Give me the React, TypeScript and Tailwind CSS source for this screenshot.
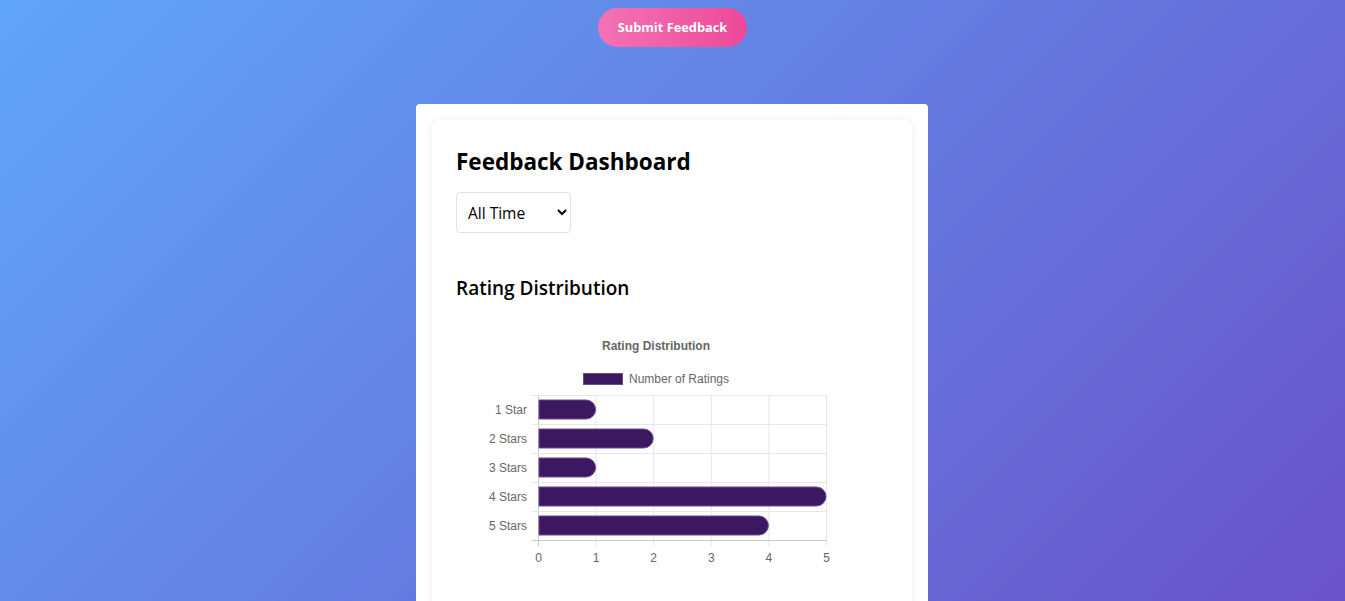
import React, { useState } from "react";

const ratings = [
  { label: "1 Star", value: 1 },
  { label: "2 Stars", value: 2 },
  { label: "3 Stars", value: 1 },
  { label: "4 Stars", value: 5 },
  { label: "5 Stars", value: 4 },
];

function RatingChart() {
  // plot area, svg coords
  const left = 82;
  const top = 65;
  const rowH = 29;
  const unit = 57.6;
  const plotW = unit * 5;
  const plotH = rowH * ratings.length;
  const font = "'Liberation Sans', Arial, sans-serif";

  return (
    <svg width="400" height="240" viewBox="0 0 400 240" className="block">
      <text x="200" y="19.5" textAnchor="middle" fontFamily={font} fontSize="12" fontWeight="bold" fill="#666">
        Rating Distribution
      </text>
      <rect x="127.5" y="43.5" width="39" height="11" fill="#3d1862" stroke="#6b4d8a" strokeWidth="1" />
      <text x="173" y="53" fontFamily={font} fontSize="12" fill="#666">
        Number of Ratings
      </text>

      {[0, 1, 2, 3, 4, 5].map((i) => (
        <line
          key={"v" + i}
          x1={left + i * unit + 0.5}
          x2={left + i * unit + 0.5}
          y1={top}
          y2={top + plotH + 6}
          stroke={i === 0 ? "#c8c8c8" : "#e6e6e6"}
        />
      ))}
      {[0, 1, 2, 3, 4, 5].map((i) => (
        <line
          key={"h" + i}
          x1={left - 6}
          x2={left + plotW}
          y1={top + i * rowH + 0.5}
          y2={top + i * rowH + 0.5}
          stroke={i === 5 ? "#c8c8c8" : "#e6e6e6"}
        />
      ))}

      {ratings.map((r, i) => {
        const y = top + i * rowH + 5;
        const w = r.value * unit;
        const h = 19;
        const rad = 9.5;
        const x0 = left + 1;
        const d = `M${x0} ${y} H${x0 + w - rad - 1} A${rad} ${rad} 0 0 1 ${x0 + w - rad - 1} ${y + h} H${x0} Z`;
        return (
          <g key={r.label}>
            <path d={d} fill="#3d1862" stroke="#6b4d8a" strokeWidth="1" />
            <text x={left - 11} y={y + 13.5} textAnchor="end" fontFamily={font} fontSize="12" fill="#666">
              {r.label}
            </text>
          </g>
        );
      })}

      {[0, 1, 2, 3, 4, 5].map((i) => (
        <text
          key={"t" + i}
          x={left + i * unit + 0.5}
          y={top + plotH + 22}
          textAnchor="middle"
          fontFamily={font}
          fontSize="12"
          fill="#666"
        >
          {i}
        </text>
      ))}
    </svg>
  );
}

export default function App() {
  const [range, setRange] = useState("all");

  return (
    <div
      className="min-h-screen w-full bg-[linear-gradient(135deg,#60a5fa_0%,#6a52c8_100%)]"
      style={{ fontFamily: "'Open Sans', 'Noto Sans', sans-serif" }}
    >
      <div className="flex justify-center pt-2">
        <button
          type="button"
          className="h-[39px] rounded-full bg-gradient-to-r from-[#f472b6] to-[#ec4899] px-5 text-[12.8px] font-bold text-white"
        >
          Submit Feedback
        </button>
      </div>

      <div className="mt-[57px] flex justify-center pr-px">
        <div className="w-[512px] rounded-t bg-white px-4 pt-4">
          <div className="h-[500px] rounded-lg bg-white px-6 pt-6 shadow-[0_0_8px_rgba(0,0,0,0.08)]">
            <h1 className="text-[22.5px] font-bold leading-[36px] text-black">
              Feedback Dashboard
            </h1>
            <select
              value={range}
              onChange={(e) => setRange(e.target.value)}
              className="mt-3 h-[41px] w-[115px] rounded border border-[#e2e2e2] bg-white pl-[7px] pr-1 text-[15.5px] text-black"
            >
              <option value="all">All Time</option>
              <option value="week">This Week</option>
              <option value="month">This Month</option>
            </select>
            <h2 className="mt-[40px] text-[19px] font-semibold leading-[30px] text-black">
              Rating Distribution
            </h2>
            <div className="mt-[27px]">
              <RatingChart />
            </div>
          </div>
        </div>
      </div>
    </div>
  );
}
